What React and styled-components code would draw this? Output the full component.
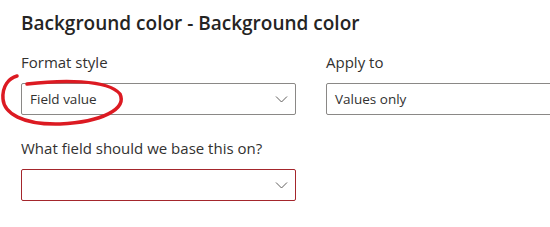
import React from 'react';
import styled, { createGlobalStyle } from 'styled-components';

const GlobalStyle = createGlobalStyle`
  html, body {
    margin: 0;
    padding: 0;
    background: #ffffff;
  }
  body {
    font-family: "Segoe UI", "Open Sans", "Noto Sans", sans-serif;
    color: #252423;
  }
`;

const Panel = styled.div`
  position: relative;
  width: 550px;
  height: 227px;
  overflow: hidden;
  padding: 10px 0 0 21px;
  box-sizing: border-box;
`;

const Title = styled.h2`
  margin: 0;
  font-size: 19px;
  font-weight: 600;
  line-height: 26px;
  color: #252423;
  white-space: nowrap;
`;

const Row = styled.div`
  display: grid;
  grid-template-columns: 275px 275px;
  column-gap: 30px;
  margin-top: ${(p) => p.$top || 0}px;
`;

const Field = styled.div`
  display: flex;
  flex-direction: column;
`;

const Label = styled.label`
  font-size: 15px;
  line-height: 20px;
  color: #323130;
  margin-bottom: 11px;
  white-space: nowrap;
`;

const Select = styled.div`
  display: flex;
  align-items: center;
  justify-content: space-between;
  height: 32px;
  box-sizing: border-box;
  border: 1px solid ${(p) => (p.$error ? '#a4262c' : '#8a8886')};
  border-radius: 2px;
  padding: 0 7px 0 8px;
  font-size: 13.5px;
  color: #323130;
  background: #fff;
`;

const Chevron = styled.svg`
  width: 13px;
  height: 12px;
  flex: none;
`;

const Scribble = styled.svg`
  position: absolute;
  left: 0;
  top: 0;
  pointer-events: none;
`;

const Dropdown = ({ value, error, chevron = true }) => (
  <Select $error={error}>
    <span>{value}</span>
    {chevron && (
      <Chevron viewBox="0 0 13 12">
        <path d="M1 3.5 L6.5 9 L12 3.5" fill="none" stroke="#605e5c" strokeWidth="1" />
      </Chevron>
    )}
  </Select>
);

export default function App() {
  return (
    <>
      <GlobalStyle />
      <Panel>
        <Title>Background color - Background color</Title>
        <Row $top={16}>
          <Field>
            <Label>Format style</Label>
            <Dropdown value="Field value" />
          </Field>
          <Field>
            <Label>Apply to</Label>
            <Dropdown value="Values only" chevron={false} />
          </Field>
        </Row>
        <Row $top={23}>
          <Field>
            <Label>What field should we base this on?</Label>
            <Dropdown value="" error />
          </Field>
        </Row>
        <Scribble width="140" height="140">
          <path
            d="M27 84 C 60 80, 108 79, 120 94 C 127 109, 102 122, 60 124 C 22 125, 4 113, 3 99 C 2 86, 9 78, 17 76"
            fill="none"
            stroke="#dc1a22"
            strokeWidth="3.5"
            strokeLinecap="round"
          />
        </Scribble>
      </Panel>
    </>
  );
}
